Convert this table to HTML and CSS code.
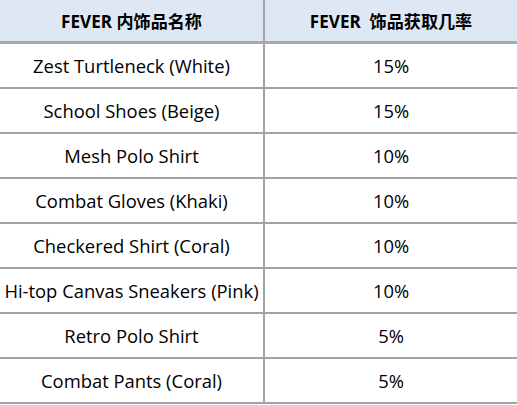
FILE: index.html
```html
<!DOCTYPE html>
<html lang="zh-CN">
<head>
<meta charset="utf-8">
<link rel="stylesheet" href="styles.css">
</head>
<body>
<div class="table">
  <div class="row head">
    <div class="cell c1">FEVER 内饰品名称</div>
    <div class="cell c2">FEVER&nbsp; 饰品获取几率</div>
  </div>
  <div class="row"><div class="cell c1">Zest Turtleneck (White)</div><div class="cell c2">15%</div></div>
  <div class="row"><div class="cell c1">School Shoes (Beige)</div><div class="cell c2">15%</div></div>
  <div class="row"><div class="cell c1">Mesh Polo Shirt</div><div class="cell c2">10%</div></div>
  <div class="row"><div class="cell c1">Combat Gloves (Khaki)</div><div class="cell c2">10%</div></div>
  <div class="row"><div class="cell c1">Checkered Shirt (Coral)</div><div class="cell c2">10%</div></div>
  <div class="row"><div class="cell c1">Hi-top Canvas Sneakers (Pink)</div><div class="cell c2">10%</div></div>
  <div class="row"><div class="cell c1">Retro Polo Shirt</div><div class="cell c2">5%</div></div>
  <div class="row"><div class="cell c1">Combat Pants (Coral)</div><div class="cell c2">5%</div></div>
</div>
</body>
</html>
```

FILE: styles.css
```css
html, body {
  margin: 0;
  padding: 0;
  background: #ffffff;
}
body {
  font-family: "Open Sans", "Noto Sans CJK SC", sans-serif;
  color: #000000;
}
.table {
  width: 517px;
  border-right: 1px solid #d8d8d8;
}
.row {
  display: grid;
  grid-template-columns: 265px 1fr;
  height: 43px;
  border-bottom: 2.5px solid #a3a3a3;
}
.row.head {
  height: 41px;
  background: #dde8f4;
  border-bottom: 3px solid #a8a8a8;
}
.cell {
  display: flex;
  align-items: center;
  justify-content: center;
  font-size: 18.4px;
}
.c1 {
  border-right: 2px solid #a3a3a3;
}
.head .cell {
  font-weight: 700;
  font-size: 17.1px;
}
```
